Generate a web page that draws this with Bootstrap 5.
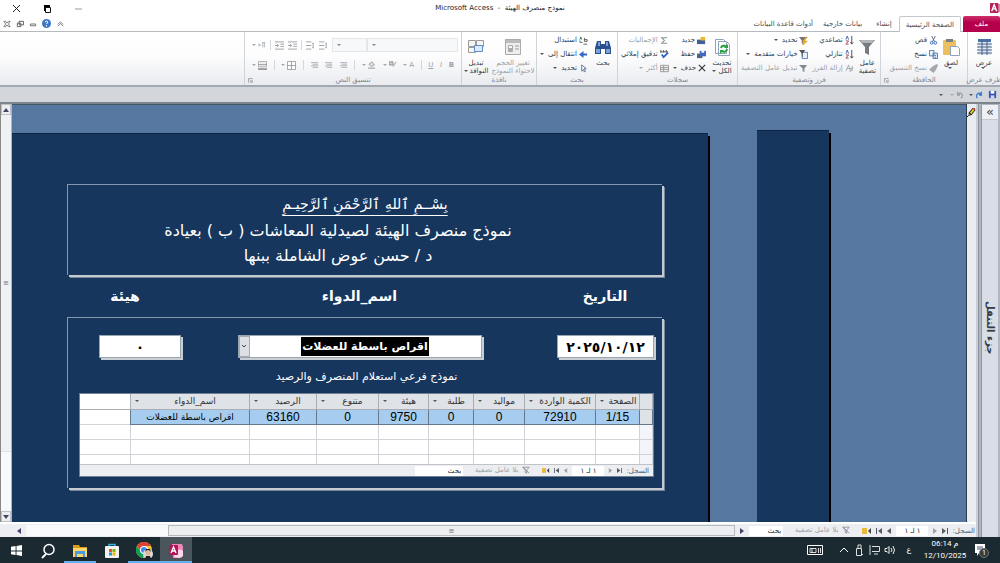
<!DOCTYPE html>
<html lang="ar" dir="rtl">
<head>
<meta charset="utf-8">
<meta name="viewport" content="width=device-width, initial-scale=1">
<title>نموذج منصرف الهيئة - Microsoft Access</title>
<link href="https://cdn.jsdelivr.net/npm/bootstrap@5.3.0/dist/css/bootstrap.min.css" rel="stylesheet">
<style>
:root{--navy:#17365d;--steel:#56779f;--ui:"DejaVu Sans","Liberation Sans",sans-serif}
body{font-family:var(--ui);font-size:7px;line-height:8px;color:#333b46;background:#fff}
button,input,select{font-family:inherit;font-size:inherit;line-height:inherit;color:inherit;border:0;background:transparent;padding:0;margin:0;border-radius:0;appearance:none}
button{white-space:nowrap}
svg{display:block;flex:none}
.s9{width:9px;height:9px}.s10{width:10px;height:10px}.s8{width:8px;height:8px}.s18{width:18px;height:18px}.s16{width:16px;height:16px}
.titlebar{height:16px;font-size:7px;color:#222}
.titlebar .winbtns{gap:22px;padding-left:12px;width:88px}
.titlebar .appmark{width:88px}
.tabs{height:16px;border-bottom:1px solid #b6babf}
.tabs a{color:#444b55;text-decoration:none;height:16px;line-height:16px;padding:0 7px}
.tabs a:nth-child(5){padding:0 3px}
.tabs .filetab{background:linear-gradient(#d0316c,#b5004b 40%,#b5004b);color:#fff;width:37px;padding:0;text-align:center;border-radius:2px 2px 0 0}
.tabs .current{background:#fff;border:1px solid #c3c7cc;border-bottom:0;padding:0 6px;margin-right:2px;border-radius:2px 2px 0 0}
.ribbon{height:55px;background:linear-gradient(#fff,#fdfdfe 45%,#e9ebef);border-bottom:2px solid #a2a9b3}
.grp{border-left:1px solid #cfd4db;padding:2px 3px 0;position:relative}
.grp .glabel{color:#7b8696;height:9px;line-height:8px;text-align:center}
.grp .launch{position:absolute;left:3px;bottom:2px}
.big{text-align:center;display:flex;flex-direction:column;align-items:center;line-height:8px}
.big svg{margin-bottom:3px}
.smallcol{display:flex;flex-direction:column;gap:4px;padding-top:1px}
.smallcol button{display:flex;align-items:center;gap:2px;height:10px}
.off{color:#9ca1a8}
.dd::after{content:"";display:inline-block;border:2px solid transparent;border-top-color:#555;border-bottom:0;margin-right:2px;vertical-align:middle}
.off.dd::after{border-top-color:#aaa}
.g-view{width:33px}.g-clip{width:87px}.g-sort{width:143px}.g-rec{width:120px}.g-find{width:81px}.g-win{width:75px}.g-text{width:217px}
.fontbox{height:14px;background:#f7f8f9 url("data:image/svg+xml,%3Csvg xmlns='http://www.w3.org/2000/svg' width='4' height='2'%3E%3Cpath d='M0 0h4L2 2z' fill='%23888'/%3E%3C/svg%3E") no-repeat 4px center;border:1px solid #e4e7ea}
.fmt{height:14px;align-items:center;display:flex}
.vr1{width:1px;height:10px;background:#d4d8dd}
.qat{height:17px;background:#d3d7dc;border-bottom:2px solid #7e848b;gap:5px;padding:0 3px}
.work{min-height:0;background:#e9ecf1}
.navpane{width:22px;background:#b0b7c1;padding:1px 2px 0 4px;border-left:1px solid #8b929b}
.navpane .inner{background:#d8dde6;border-left:1px solid #8f959e}
.navpane button{height:15px;background:#eef0f4;border-bottom:1px solid #c4c9d1;color:#39424f;font-size:13px}
.navtitle{writing-mode:vertical-rl;font-size:10px;font-weight:700;line-height:16px;color:#333a45;padding-top:181px}
.selstrip{width:12px;background:#e9ecf1;border-left:1px solid #2e3a4b}
.canvas{background:var(--steel);border-top:1px solid #456;gap:49px;padding:25px 137px 0 0}
.docpane{border-right:2px solid #c9ced6}
.sidepane{width:72px;background:var(--navy);box-shadow:2px 3px 0 #000,inset 0 1px 0 #0d2340}
.mainpane{background:var(--navy);margin-top:3px;box-shadow:2px 3px 0 #000,inset 0 1px 0 #0d2340;padding:51px 46px 0 55px;color:#fff}
.sunk{border:1px solid #8397b0;border-right:0;border-bottom:0;box-shadow:2px 2px 0 #c3cad0,3px 3px 0 #75859a}
.heading{height:91px;padding-top:5px;font-size:16px;line-height:25px}
.heading .basmala{font-size:14px;line-height:28px;text-decoration:underline;text-decoration-thickness:1px;text-underline-offset:6px;padding-left:0}
.heading p{margin:0;padding-right:54px}
.labels{height:42px;font-weight:700;font-size:14px;display:grid;grid-template-columns:114px 1fr 116px;align-items:center;text-align:center}
.labels label:nth-child(2){padding-right:12px}
.detail{height:171px;padding:17px 8px 0 11px}
.field{height:23px;background:#fff;border:1px solid #9aa5b2;box-shadow:2px 2px 0 #c9ced2;color:#000;font-weight:700}
.field.date{width:97px}.field.qty{width:82px;margin-left:20px}.field.combo{width:244px;margin-right:19px}
.field input{font-weight:700;text-align:center;font-size:14px}
.field.combo input{width:128px;height:19px;background:#000;color:#fff;font-size:11px}
.combo button{width:11px;background:#dcdfe3;border:1px solid #a6abb2}
.caption2{font-size:11px;height:35px;line-height:37px;padding-right:0}
.sheet{height:84px;background:#fff;border:1px solid #6f8093;color:#000}
.sheetbody{height:70px;overflow:hidden}
.sheet table{table-layout:fixed;width:100%;border-collapse:collapse}
.sheet td,.sheet th{height:15px;padding:0;text-align:center;border:1px solid #d0d3d7;border-top:0;line-height:14px;font-weight:400;white-space:nowrap;overflow:hidden}
.sheet th{background:#dfe2e6;border-color:#a9aeb5;font-size:9px;color:#333}
.sheet th .d-flex{padding-left:4px}
.sheet td:last-child,.sheet th:last-child{background:#fff;border-left:0}
.sheet td:first-child{background:#f4f5fb}
.sheet .sel td{background:#a6cdef;border-color:#66798c;font:12px/14px "Liberation Sans","DejaVu Sans",sans-serif}
.sheet .sel td:first-child{background:#dfe2e6}
.sheet .sel td:last-child{background:#fff;border-color:#d0d3d7}
.sheet .sel .drug{font:9px/14px var(--ui)}
.recbar{background:#eceef1;color:#555c66}
.sheet .recbar{height:12px;border-top:1px solid #c0c4c9}
.recbar input{background:#fff;text-align:center;color:#222;height:10px}
.recbar button{height:10px;line-height:9px}
.recbar input.find{text-align:right;padding-right:2px}
.docbar{height:15px;border-top:2px solid #fff;padding-right:1px}
.thumb{background:#eceef0;border:1px solid #b5bac0;height:11px;width:80%}
.vscroll{width:12px;background:#f8f9fa;border-right:1px solid #aeb5be;border-left:1px solid #888}
.vscroll button{height:11px;width:10px;border:1px solid #bcc1c8;background:#eceef2}
.vthumb{height:85%;background:#eff1f3}
.task{height:26px;background:#1b2a30;color:#fff;font-family:Roboto,"DejaVu Sans",sans-serif;font-size:8px;line-height:12px}
.task .app{width:32px;height:26px;display:flex;align-items:center;justify-content:center;padding-top:1px}
.task .open{box-shadow:inset 0 -2px 0 #68aee8}
.task .live{background:#4a565c}
.tray{gap:4px;padding-right:8px}
.clock{width:46px;text-align:center;line-height:12px;direction:ltr}
.note{position:relative}
.note span{position:absolute;left:7px;top:5px;width:10px;height:10px;border-radius:50%;background:#333b40;border:1px solid #71787c;font-size:7px;line-height:8px;text-align:center}
</style>
</head>
<body class="vh-100 d-flex flex-column overflow-hidden">
<svg class="d-none" xmlns="http://www.w3.org/2000/svg">
 <symbol id="grid" viewBox="0 0 18 18"><path fill="#dfe9f5" d="M3 1h13v16H3z"/><path fill="#4a72a8" d="M3 1h13v3H3z"/><path d="M2 6h15M2 9h15M2 12h15M2 15h15M7 1v16M12 1v16" stroke="#4a6384"/></symbol>
 <symbol id="paste" viewBox="0 0 18 18"><rect x="1" y="2" width="13" height="15" rx="1" fill="#eebf5d"/><path fill="#777f89" d="M4 1h7v3H4z"/><path fill="#fff" stroke="#8ea2ba" d="M8.500 8.500h7l2 2v7h-9z"/></symbol>
 <symbol id="funnel" viewBox="0 0 18 18"><path fill="#777b80" d="M1 2h16l-6 7v8l-4-2V9z"/><path fill="#b3b6b9" d="M2 2h14l-2 3H4z"/></symbol>
 <symbol id="refresh" viewBox="0 0 18 18"><path fill="#fff" stroke="#8da3bb" d="M2.500 1.500h8l3 3v11h-11zM5.500 3.500h8l3 3v11h-11z"/><path d="M8 10a3 3 0 0 1 5-1.500M14 11a3 3 0 0 1-5 2" fill="none" stroke="#24a33d" stroke-width="2"/><path fill="#24a33d" d="M15 6v4h-4zM7 16v-4h4z"/></symbol>
 <symbol id="binoc" viewBox="0 0 18 18"><path fill="#294f8f" d="M3 3h4v3h4V3h4l2 7v6h-6v-5H7v5H1v-6z"/><path fill="#7ba2d6" d="M4 4h2v4H4zM12 4h2v4h-2zM2 11h4v4H2zM12 11h4v4h-4z"/></symbol>
 <symbol id="formsize" viewBox="0 0 18 18"><path fill="#eee" stroke="#aaa" d="M1.500 1.500h15v15h-15z"/><path fill="#bbb" d="M2 2h14v3H2z"/><path fill="#f6f6f6" stroke="#aaa" d="M4.500 7.500h4v6h-4z"/><path fill="#aaa" d="M5 10h3v3H5z"/><path stroke="#999" d="M11 8h4M11 11h4"/></symbol>
 <symbol id="windows" viewBox="0 0 18 18"><path fill="#f4f4f4" stroke="#999" d="M1.500 2.500h7v6h-7zM9.500 2.500h7v6h-7zM1.500 9.500h7v5h-7z"/><path fill="#dceafb" stroke="#5b8bc9" d="M7.500 7.500h8v6h-8z"/></symbol>
 <symbol id="cut" viewBox="0 0 10 10"><path d="M3 0l3 6M7 0L4 6" stroke="#51647e"/><circle cx="3" cy="7.500" r="1.500" fill="none" stroke="#285bb4"/><circle cx="7" cy="7.500" r="1.500" fill="none" stroke="#285bb4"/></symbol>
 <symbol id="copy" viewBox="0 0 10 10"><path fill="#e9f2fc" stroke="#4771a8" d="M.5.500h5v6h-5zM4.500 3.500h5v6h-5z"/><path d="M6 6h2M6 8h2" stroke="#4771a8"/></symbol>
 <symbol id="brush" viewBox="0 0 10 10"><path fill="#a4a8ae" d="M9 0L5 2 0 6l5 4 3-4 2-5z"/></symbol>
 <symbol id="az" viewBox="0 0 10 10"><path d="M7.500 0v9M6 7l1.500 2L9 7" fill="none" stroke="#444"/><path d="M1 4l1.500-4L4 4" fill="none" stroke="#3b5fa8"/><path d="M1 5.500h3L1 9h3" fill="none" stroke="#a23a55"/></symbol>
 <symbol id="azx" viewBox="0 0 10 10"><path d="M1 8l3-7 2 7M5 9l4-5M2 5h6M8 8V2" fill="none" stroke="#a5a8ad"/></symbol>
 <symbol id="fsel" viewBox="0 0 10 10"><path fill="#777" d="M0 1h8L5 5v4L3 8V5z"/><path d="M9 1L5 6h3L4 10" fill="none" stroke="#e2a51b" stroke-width="1.500"/></symbol>
 <symbol id="fadv" viewBox="0 0 10 10"><path fill="#e5effb" stroke="#4f79b4" d="M3.500 2.500h6v7h-6z"/><path fill="#555" d="M0 0h7L4 4v4L3 7V4z"/></symbol>
 <symbol id="fun" viewBox="0 0 10 10"><path fill="#85898f" d="M0 1h9L6 5v4L4 8V5z"/></symbol>
 <symbol id="nofun" viewBox="0 0 10 10"><path fill="none" stroke="#85898f" d="M1 1.500h8L6 5v4L4 8V5zM1 1l8 8"/></symbol>
 <symbol id="newrec" viewBox="0 0 10 10"><path fill="#3f5f9a" d="M0 4h9v5H0z"/><path fill="#f1b72e" d="M4 1h5v4H4z"/></symbol>
 <symbol id="saverec" viewBox="0 0 10 10"><path fill="#54617a" d="M0 4h6v5H0z"/><path fill="#4169bf" d="M3 1h7v6H3z"/><path fill="#fff" d="M5 1h3v2H5z"/></symbol>
 <symbol id="x" viewBox="0 0 10 10"><path d="M1 1l8 8M9 1L1 9" stroke="#333" stroke-width="1.400"/></symbol>
 <symbol id="sum" viewBox="0 0 10 10"><path d="M8 2H2l3 3-3 3h6" fill="none" stroke="#8d9299" stroke-width="1.200"/></symbol>
 <symbol id="spell" viewBox="0 0 10 10"><path d="M0 2h9M1 0v3M4 0v3M7 0v3" stroke="#555"/><path d="M2 5l2 3 5-5" fill="none" stroke="#2e62c4" stroke-width="2"/></symbol>
 <symbol id="more" viewBox="0 0 10 10"><path fill="#eee" stroke="#999" d="M.5 1.500h9v7h-9zM0 4h10M0 6h10M4 1v8"/></symbol>
 <symbol id="repl" viewBox="0 0 10 10"><path d="M1 4l1-3 1 3M1 5v2h3" fill="none" stroke="#3c6b51"/><path d="M6 2v4h3V4H6M5 9h4" fill="none" stroke="#555"/></symbol>
 <symbol id="goto" viewBox="0 0 10 10"><path fill="#3267c6" d="M0 5l5-4v3h4v2H5v3z"/></symbol>
 <symbol id="cursor" viewBox="0 0 10 10"><path fill="#fff" stroke="#536b91" d="M3 1v7l2-2 1 3 1-1-1-3h2z"/></symbol>
 <symbol id="lines" viewBox="0 0 10 10"><path d="M0 2h9M2 4h7M0 6h9M2 8h7" stroke="#a2a6ab"/></symbol>
 <symbol id="indent" viewBox="0 0 10 10"><path d="M0 1h6M0 5h6M0 9h6M8 2v6M7 3l1-1M7 7l1 1" stroke="#9a9da1" fill="none"/></symbol>
 <symbol id="dent" viewBox="0 0 10 10"><path d="M0 1h10M0 9h10M6 3.500h4M6 6h4M0 5h4M2 3l2 2-2 2" stroke="#9a9da1" fill="none"/></symbol>
 <symbol id="para" viewBox="0 0 10 10"><path d="M0 5h3l-2-2m2 2L1 7M5 2h4M6 2v6M8 2v6" stroke="#a5a8ac" fill="none"/></symbol>
 <symbol id="cells" viewBox="0 0 10 10"><path d="M.5.500h9v9h-9zM5 0v10M0 5h10" stroke="#9a9ea4" fill="#fff"/></symbol>
 <symbol id="rows" viewBox="0 0 10 10"><path d="M.5.500h9v6h-9z" stroke="#aaa" fill="#eee"/><path d="M0 4h10" stroke="#999"/><path fill="#999" d="M0 8h10v2H0z"/></symbol>
 <symbol id="bucket" viewBox="0 0 10 10"><path d="M1 4l4-3 3 4-4 2z" fill="#ddd" stroke="#999"/><path d="M0 9h9" stroke="#bbb" stroke-width="2"/></symbol>
 <symbol id="pen" viewBox="0 0 10 10"><path d="M0 1h5v4H0zM9 1L5 7" fill="#ccc" stroke="#888"/></symbol>
 <symbol id="launch" viewBox="0 0 6 6"><path d="M.5 5.500v-5h5M2 2l3 3M5 2v3H2" fill="none" stroke="#999"/></symbol>
 <symbol id="disk" viewBox="0 0 10 10"><path fill="#3b55b7" d="M1 1h8v8H1z"/><path fill="#fff" d="M3 1h4v3H3z"/><path fill="#cdd6f4" d="M3 6h4v3H3z"/></symbol>
 <symbol id="redo" viewBox="0 0 10 10"><path d="M3 9C0 5 4 1 8 4M8 1v4H5" fill="none" stroke="currentColor" stroke-width="1.600"/></symbol>
 <symbol id="undo" viewBox="0 0 10 10"><path d="M6 9C11 5 6 1 2 4M2 1v4h3" fill="none" stroke="currentColor" stroke-width="1.600"/></symbol>
 <symbol id="accessmark" viewBox="0 0 12 12"><path fill="#e58bb1" d="M6 1h6v10H6z"/><rect width="10" height="12" rx="1" fill="#b42257"/><path d="M2 10L5 2l3 8M3 7h4" fill="none" stroke="#fff" stroke-width="1.600"/></symbol>
 <symbol id="pencil" viewBox="0 0 10 10"><path d="M3 7L8 1" stroke="#222" stroke-width="4"/><path d="M4 6l4-5" stroke="#e6d325" stroke-width="2"/><path fill="#000" d="M0 9h1v1H0zM2 7l2 1-3 1z"/><path fill="#c33" d="M7 0h2v2H7z"/></symbol>
 <symbol id="tl" viewBox="0 0 6 6"><path fill="currentColor" d="M5 0v6L1 3z"/></symbol>
 <symbol id="tr" viewBox="0 0 6 6"><path fill="currentColor" d="M1 0v6l4-3z"/></symbol>
 <symbol id="tlend" viewBox="0 0 6 6"><path fill="currentColor" d="M6 0v6L2 3zM0 0h1v6H0z"/></symbol>
 <symbol id="trend" viewBox="0 0 6 6"><path fill="currentColor" d="M0 0v6l4-3zM5 0h1v6H5z"/></symbol>
 <symbol id="star" viewBox="0 0 10 6"><path fill="#e8b93b" d="M0 0h5v6H0z"/><path fill="#444" d="M9 0v6L6 3z"/></symbol>
</svg>

<header class="titlebar d-flex align-items-center">
 <div class="appmark"><svg class="s10"><use href="#accessmark"/></svg></div>
 <div class="flex-fill text-center">نموذج منصرف الهيئة &nbsp;- &nbsp;Microsoft Access</div>
 <div class="winbtns d-flex align-items-center justify-content-end">
  <button aria-label="تصغير"><svg class="s9" viewBox="0 0 9 9"><path d="M1 5h7" stroke="#999"/></svg></button>
  <button aria-label="استعادة"><svg class="s9" viewBox="0 0 9 9"><path d="M1 2h6M2 1v6" stroke="#000" stroke-width="2"/><path fill="#fff" stroke="#111" d="M2.500 3.500h5v5h-5z"/></svg></button>
  <button aria-label="إغلاق"><svg class="s9" viewBox="0 0 9 9"><path d="M1 1l7 7M8 1L1 8" stroke="#222"/></svg></button>
 </div>
</header>

<nav class="tabs d-flex">
 <a href="#" class="filetab">ملف</a><a href="#" class="current">الصفحة الرئيسية</a><a href="#">إنشاء</a><a href="#">بيانات خارجية</a><a href="#">أدوات قاعدة البيانات</a>
 <div class="flex-fill"></div>
 <div class="d-flex align-items-center" style="gap:5px;padding-left:3px">
  <button aria-label="طي الشريط"><svg class="s8" viewBox="0 0 9 9"><path d="M2 5l3-3 3 3M2 7l3-3 3 3" fill="none" stroke="#777"/></svg></button>
  <button aria-label="تعليمات"><svg class="s9" viewBox="0 0 9 9"><circle cx="4.500" cy="4.500" r="4.500" fill="#3f77c8"/><path d="M3 3q1.500-2 3 0L4.500 5M4.500 6v1.500" stroke="#fff" fill="none"/></svg></button>
  <button aria-label="تصغير النموذج"><svg class="s8" viewBox="0 0 9 9"><path fill="#fff" stroke="#666" d="M1.500 4.500h6v2h-6z"/></svg></button>
  <button aria-label="استعادة النموذج"><svg class="s8" viewBox="0 0 9 9"><path fill="#fff" stroke="#555" d="M3.500 1.500h5v4h-5zM1.500 3.500h4v4h-4z"/></svg></button>
  <button aria-label="إغلاق النموذج"><svg class="s8" viewBox="0 0 9 9"><path fill="none" stroke="#777" d="M1 1.500h2l1.500 2 1.500-2h2L6 4.500l2 3H6l-1.500-2-1.500 2H1l2-3z"/></svg></button>
 </div>
</nav>

<section class="ribbon d-flex">
 <div class="grp g-view d-flex flex-column px-0"><div class="flex-fill d-flex justify-content-center pt-1"><button class="big dd"><svg class="s18"><use href="#grid"/></svg>عرض</button></div><div class="glabel d-flex justify-content-center text-nowrap">طرف عرض</div></div>
 <div class="grp g-clip d-flex flex-column">
  <div class="flex-fill d-flex gap-1 pe-1"><button class="big dd pt-1"><svg class="s18"><use href="#paste"/></svg>لصق</button>
  <div class="smallcol flex-fill"><button><svg class="s9"><use href="#cut"/></svg>قص</button><button><svg class="s9"><use href="#copy"/></svg>نسخ</button><button class="off"><svg class="s9"><use href="#brush"/></svg>نسخ التنسيق</button></div></div>
  <div class="glabel">الحافظة</div><svg class="launch" width="5" height="5"><use href="#launch"/></svg></div>
 <div class="grp g-sort d-flex flex-column">
  <div class="flex-fill d-flex gap-1"><button class="big pt-1" style="width:22px"><svg class="s18"><use href="#funnel"/></svg>عامل<br>تصفية</button>
  <div class="smallcol"><button><svg class="s9"><use href="#az"/></svg>تصاعدي</button><button><svg class="s9"><use href="#az"/></svg>تنازلي</button><button class="off"><svg class="s9"><use href="#azx"/></svg>إزالة الفرز</button></div>
  <div class="smallcol"><button class="dd"><svg class="s9"><use href="#fsel"/></svg>تحديد</button><button class="dd"><svg class="s9"><use href="#fadv"/></svg>خيارات متقدمة</button><button class="off"><svg class="s9"><use href="#fun"/></svg>تبديل عامل التصفية</button></div></div>
  <div class="glabel">فرز وتصفية</div></div>
 <div class="grp g-rec d-flex flex-column">
  <div class="flex-fill d-flex gap-1"><button class="big pt-1" style="width:24px"><svg class="s18"><use href="#refresh"/></svg>تحديث<br><span class="dd">الكل</span></button>
  <div class="smallcol"><button><svg class="s9"><use href="#newrec"/></svg>جديد</button><button><svg class="s9"><use href="#saverec"/></svg>حفظ</button><button class="dd"><svg class="s8"><use href="#x"/></svg>حذف</button></div>
  <div class="smallcol"><button class="off"><svg class="s9"><use href="#sum"/></svg>الإجماليات</button><button><svg class="s9"><use href="#spell"/></svg>تدقيق إملائي</button><button class="off dd"><svg class="s9"><use href="#more"/></svg>أكثر</button></div></div>
  <div class="glabel">سجلات</div></div>
 <div class="grp g-find d-flex flex-column">
  <div class="flex-fill d-flex gap-1"><button class="big pt-1" style="width:26px"><svg class="s18"><use href="#binoc"/></svg>بحث</button>
  <div class="smallcol"><button><svg class="s9"><use href="#repl"/></svg>استبدال</button><button class="dd"><svg class="s9"><use href="#goto"/></svg>انتقال إلى</button><button class="dd"><svg class="s9"><use href="#cursor"/></svg>تحديد</button></div></div>
  <div class="glabel">بحث</div></div>
 <div class="grp g-win d-flex flex-column px-0">
  <div class="flex-fill d-flex justify-content-around"><button class="big off pt-1"><svg class="s18"><use href="#formsize"/></svg>تغيير الحجم<br>لاحتواء النموذج</button><button class="big pt-1"><svg class="s18"><use href="#windows"/></svg>تبديل<br><span class="dd">النوافذ</span></button></div>
  <div class="glabel">نافذة</div></div>
 <div class="grp g-text d-flex flex-column off">
  <div class="flex-fill d-flex flex-column justify-content-between py-1">
   <div class="fmt" style="gap:4px"><div class="d-flex"><select class="fontbox" style="width:91px" aria-label="الخط" disabled><option></option></select><select class="fontbox" style="width:35px" aria-label="حجم الخط" disabled><option></option></select></div>
    <svg class="s9"><use href="#indent"/></svg><svg class="s9"><use href="#indent"/></svg><i class="vr1"></i><svg class="s9"><use href="#dent"/></svg><svg class="s9"><use href="#dent"/></svg><i class="vr1"></i><span class="dd off d-flex align-items-center"><svg class="s8"><use href="#para"/></svg></span></div>
   <div class="fmt justify-content-between px-1"><b>B</b><i>I</i><u>U</u><i class="vr1"></i><span class="dd off">A</span><span class="dd off d-flex align-items-center"><svg class="s8"><use href="#pen"/></svg></span><span class="dd off d-flex align-items-center"><svg class="s8"><use href="#bucket"/></svg></span><i class="vr1"></i><svg class="s8"><use href="#lines"/></svg><svg class="s8"><use href="#lines"/></svg><svg class="s8"><use href="#lines"/></svg><i class="vr1"></i><span class="dd off d-flex align-items-center"><svg class="s9"><use href="#cells"/></svg></span><i class="vr1"></i><span class="dd off d-flex align-items-center"><svg class="s9"><use href="#rows"/></svg></span></div></div>
  <div class="glabel">تنسيق النص</div><svg class="launch" width="5" height="5"><use href="#launch"/></svg></div>
</section>

<div class="qat d-flex align-items-center">
 <button aria-label="حفظ"><svg class="s9"><use href="#disk"/></svg></button><button aria-label="تراجع" class="dd d-flex align-items-center" style="color:#3a77cf"><svg class="s8"><use href="#redo"/></svg></button><button aria-label="إعادة" class="dd off d-flex align-items-center"><svg class="s8"><use href="#undo"/></svg></button><button class="dd" aria-label="تخصيص"></button>
</div>

<main class="work d-flex flex-fill">
 <aside class="navpane d-flex"><div class="inner flex-fill d-flex flex-column"><button aria-label="توسيع جزء التنقل">»</button><div class="navtitle">جزء التنقل</div></div></aside>
 <div class="docpane flex-fill d-flex flex-column" style="min-width:0">
  <div class="d-flex flex-fill" style="min-height:0">
   <div class="selstrip"><svg class="s9 mt-1"><use href="#pencil"/></svg></div>
   <div class="canvas d-flex flex-fill overflow-hidden">
    <div class="sidepane flex-shrink-0"></div>
    <form class="mainpane flex-fill">
     <div class="sunk heading text-center"><div class="basmala">بِسْــمِ ٱللهِ ٱلرَّحْمَنِ ٱلرَّحِيـمِ</div><p>نموذج منصرف الهيئة لصيدلية المعاشات ( ب ) بعيادة</p><p>د / حسن عوض الشاملة ببنها</p></div>
     <div class="labels"><label for="d">التاريخ</label><label for="m">اسم_الدواء</label><label for="q">هيئة</label></div>
     <div class="sunk detail">
      <div class="d-flex justify-content-between">
       <div class="field date d-flex"><input id="d" class="w-100" value="٢٠٢٥/١٠/١٢"></div>
       <div class="field combo d-flex"><div class="flex-fill d-flex justify-content-center align-items-center"><input id="m" value="اقراص باسطة للعضلات"></div><button type="button" aria-label="فتح القائمة"><svg width="5" height="4" class="mx-auto"><path d="M0 0l2 2 2-2" fill="none" stroke="#444"/></svg></button></div>
       <div class="field qty d-flex"><input id="q" class="w-100" value="٠"></div>
      </div>
      <div class="caption2 text-center">نموذج فرعي استعلام المنصرف والرصيد</div>
      <div class="sheet">
       <div class="sheetbody"><table>
        <colgroup><col style="width:13px"><col style="width:44px"><col style="width:71px"><col style="width:51px"><col style="width:45px"><col style="width:50px"><col style="width:62px"><col style="width:67px"><col style="width:119px"><col></colgroup>
        <tr><th></th><th><div class="d-flex dd align-items-center"><span class="flex-fill">الصفحة</span></div></th><th><div class="d-flex dd align-items-center"><span class="flex-fill">الكمية الواردة</span></div></th><th><div class="d-flex dd align-items-center"><span class="flex-fill">مواليد</span></div></th><th><div class="d-flex dd align-items-center"><span class="flex-fill">طلبة</span></div></th><th><div class="d-flex dd align-items-center"><span class="flex-fill">هيئة</span></div></th><th><div class="d-flex dd align-items-center"><span class="flex-fill">متنوع</span></div></th><th><div class="d-flex dd align-items-center"><span class="flex-fill">الرصيد</span></div></th><th><div class="d-flex dd align-items-center"><span class="flex-fill">اسم_الدواء</span></div></th><th></th></tr>
        <tr class="sel"><td></td><td>1/15</td><td>72910</td><td>0</td><td>0</td><td>9750</td><td>0</td><td>63160</td><td class="drug">اقراص باسطة للعضلات</td><td></td></tr>
        <tr><td></td><td></td><td></td><td></td><td></td><td></td><td></td><td></td><td></td><td></td></tr>
        <tr><td></td><td></td><td></td><td></td><td></td><td></td><td></td><td></td><td></td><td></td></tr>
        <tr><td></td><td></td><td></td><td></td><td></td><td></td><td></td><td></td><td></td><td></td></tr>
       </table></div>
       <div class="recbar d-flex align-items-center gap-1 pe-1"><span>السجل:</span><svg width="5" height="5"><use href="#trend"/></svg><svg class="off" width="5" height="5"><use href="#tr"/></svg><input value="١ لـ ١" aria-label="السجل الحالي" style="width:32px"><svg class="off" width="5" height="5"><use href="#tl"/></svg><svg width="5" height="5"><use href="#tlend"/></svg><svg width="8" height="5"><use href="#star"/></svg><button type="button" class="off d-flex gap-1 px-2"><svg class="s8"><use href="#nofun"/></svg>بلا عامل تصفية</button><input class="find" value="بحث" aria-label="بحث" style="width:48px"><div class="flex-fill"></div></div>
      </div>
     </div>
    </form>
   </div>
   <div class="vscroll d-flex flex-column"><button aria-label="أعلى"><svg width="6" height="4" class="mx-auto"><path fill="#446" d="M0 4h6L3 0z"/></svg></button><div class="flex-fill bg-light"><div class="vthumb border-bottom d-flex align-items-center justify-content-center text-secondary">≡</div></div><button aria-label="أسفل"><svg width="6" height="4" class="mx-auto"><path fill="#446" d="M0 0h6L3 4z"/></svg></button></div>
  </div>
  <div class="recbar docbar d-flex align-items-center gap-1"><span>السجل:</span><svg width="6" height="6"><use href="#trend"/></svg><svg class="off" width="6" height="6"><use href="#tr"/></svg><input value="١ لـ ١" aria-label="السجل" style="width:32px"><svg width="6" height="6"><use href="#tl"/></svg><svg width="6" height="6"><use href="#tlend"/></svg><svg width="10" height="6"><use href="#star"/></svg><button class="off d-flex gap-1 px-2"><svg class="s8"><use href="#nofun"/></svg>بلا عامل تصفية</button><input class="find" value="بحث" aria-label="بحث في السجلات" style="width:34px"><svg width="6" height="8" style="color:#446"><use href="#tr"/></svg><div class="flex-fill d-flex bg-light"><div class="thumb d-flex justify-content-center align-items-center text-secondary">≡</div></div><svg width="6" height="8" style="color:#446"><use href="#tl"/></svg><div style="width:12px"></div></div>
 </div>
</main>

<footer class="task d-flex" dir="ltr">
 <button class="app" aria-label="ابدأ"><svg width="11" height="11" viewBox="0 0 12 12"><path fill="#fff" d="M0 2l5-1v5H0zM6 1l6-1v6H6zM0 7h5v4l-5-1zM6 7h6v5l-6-1z"/></svg></button>
 <button class="app" aria-label="بحث"><svg class="s16" viewBox="0 0 16 16"><circle cx="9" cy="6.500" r="5" fill="none" stroke="#fff" stroke-width="1.500"/><path d="M6 11l-4 4" stroke="#fff" stroke-width="1.800"/></svg></button>
 <button class="app open" aria-label="الملفات"><svg class="s16" viewBox="0 0 16 16"><path fill="#d99a16" d="M1 2h6l1 2h7v9H1z"/><path fill="#fcd46a" d="M1 5h14v9H1z"/><path fill="#4a9be0" d="M3 8h10v6h-2v-3H5v3H3z"/></svg></button>
 <button class="app" aria-label="المتجر"><svg class="s16" viewBox="0 0 16 16"><path d="M5 4V1.500h6V4" fill="none" stroke="#34b4e4" stroke-width="1.500"/><rect x="1" y="3" width="14" height="12" rx="1" fill="#f2f2f2"/><path fill="#e8502c" d="M5 6h3v3H5z"/><path fill="#7ab800" d="M8.500 6h3v3h-3z"/><path fill="#1899e0" d="M5 9.500h3v3H5z"/><path fill="#f5b400" d="M8.500 9.500h3v3h-3z"/></svg></button>
 <button class="app open" aria-label="Chrome"><svg width="17" height="17" viewBox="0 0 17 17"><circle cx="8" cy="8" r="8" fill="#f4c430"/><path fill="#dc4437" d="M1 4a8 8 0 0 1 14 0H8L5 9z"/><path fill="#149c56" d="M1 4l4 6 3 2-1 4A8 8 0 0 1 1 4z"/><circle cx="8" cy="8" r="4" fill="#fff"/><circle cx="8" cy="8" r="3" fill="#4285f4"/><circle cx="12" cy="12" r="5" fill="#d9dde0"/><circle cx="12" cy="11" r="2.500" fill="#e6b491"/><path fill="#222" d="M9 10q3-4 6 0l-1-3h-4zM9 17l1-3h4l1 3z"/></svg></button>
 <button class="app open live" aria-label="Access"><svg width="16" height="16" viewBox="0 0 16 16"><path fill="#ee86b8" d="M4 1h10l1 3v9l-2 2H5z"/><path fill="#fbd9e8" d="M8 8q4-3 7 0v5l-4 2-5-1z"/><rect x="1" y="2" width="9" height="10" rx="1" fill="#b01657"/><path d="M3 10l2.500-6L8 10M4 8h3" fill="none" stroke="#fff" stroke-width="1.300"/></svg></button>
 <div class="flex-fill"></div>
 <div class="tray d-flex align-items-center">
  <svg width="16" height="12" viewBox="0 0 16 12" style="margin-right:12px"><path fill="none" stroke="#fff" d="M.5 1.500h15v9H.5z"/><path fill="none" stroke="#ddd" d="M3 4.500h6v4H3zM5 4v4M11.500 4v5M13.500 4v5"/></svg>
  <svg width="11" height="12" viewBox="0 0 11 12"><path d="M1 8l4-4 4 4" fill="none" stroke="#fff"/></svg>
  <svg width="11" height="12" viewBox="0 0 11 12"><path d="M2.500 4.500h5v7h-5zM4 4V1h3v3M7 9l2 2" fill="none" stroke="#ddd"/></svg>
  <svg width="11" height="12" viewBox="0 0 11 12"><path d="M3 2.500h7.500v5H3M1 1v10M5 10h4" fill="none" stroke="#ddd"/></svg>
  <svg width="12" height="12" viewBox="0 0 12 12"><path d="M1 4.500h2l2-2v7l-2-2H1zM7 4q2 2 0 4M9 2q3 4 0 8" fill="none" stroke="#eee"/></svg>
  <span style="width:18px;text-align:center">ع</span>
  <div class="clock"><div>06:14 م</div><div>12/10/2025</div></div>
  <div class="note"><svg width="20" height="14" viewBox="0 0 20 14"><path fill="#fff" d="M3 1h10v9H7l-2 3v-3H3z"/><path d="M5 4h6M5 6h6" stroke="#456"/></svg><span>1</span></div>
 </div>
</footer>
<script src="https://cdn.jsdelivr.net/npm/bootstrap@5.3.0/dist/js/bootstrap.bundle.min.js"></script>
</body>
</html>
